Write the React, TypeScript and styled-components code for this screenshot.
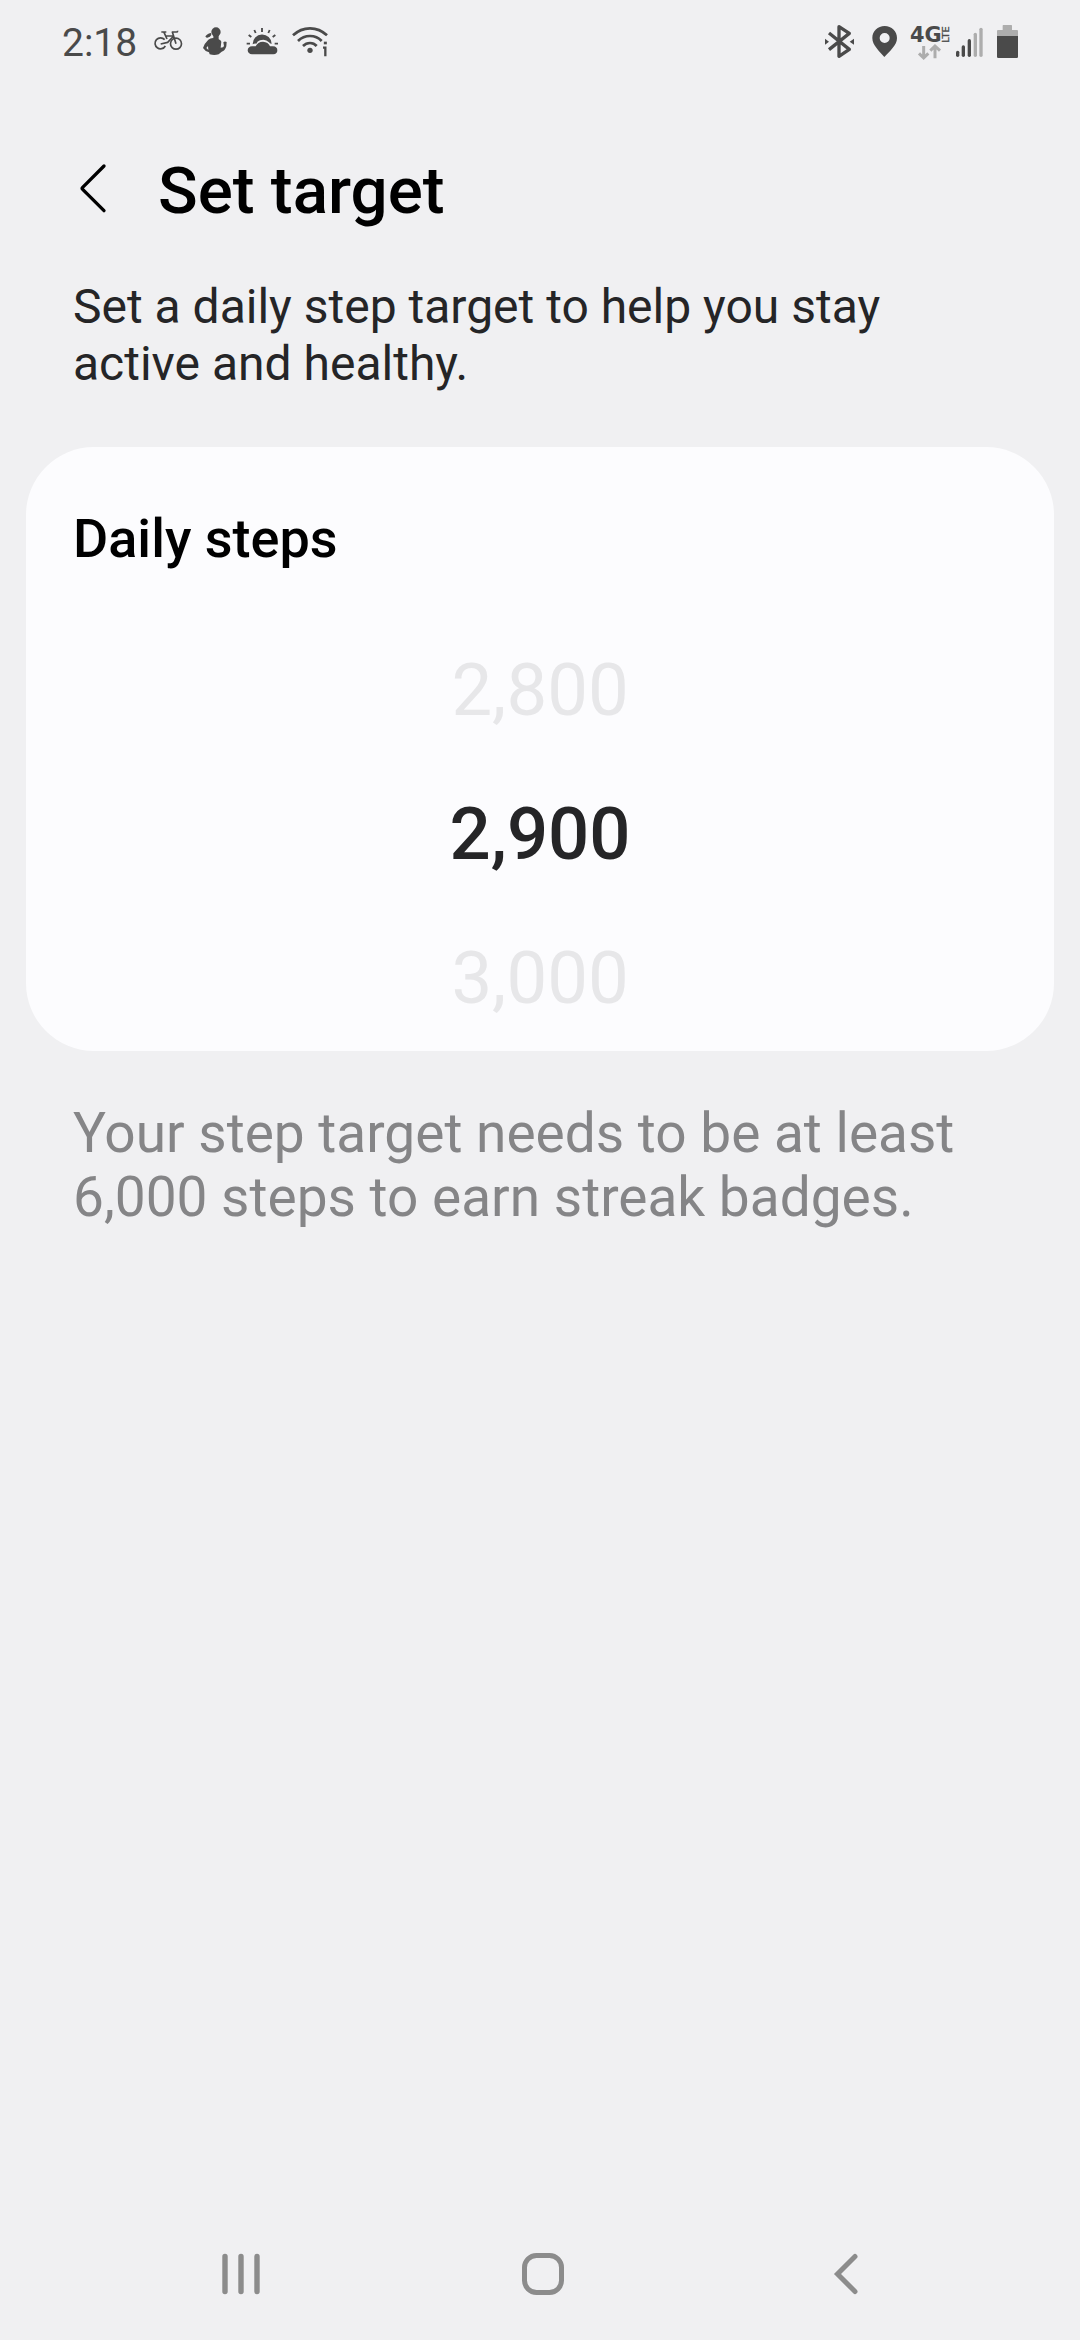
import React from 'react';
import styled, { createGlobalStyle } from 'styled-components';

const ink = '#4a4a4a';
const faint = '#adadad';

const GlobalStyle = createGlobalStyle`
  html, body { margin: 0; padding: 0; background: #f0f0f2; }
  * { box-sizing: border-box; }
  svg { display: block; flex: none; }
`;

const Screen = styled.div`
  width: 1080px;
  height: 2340px;
  display: flex;
  flex-direction: column;
  background: #f0f0f2;
  font-family: Roboto, 'Liberation Sans', sans-serif;
  overflow: hidden;
`;

const StatusBar = styled.header`
  height: 86px;
  padding: 20px 61px 0 62px;
  display: flex;
  justify-content: space-between;
  align-items: flex-start;
`;

const StatusGroup = styled.div`
  display: flex;
  align-items: flex-start;
`;

const Clock = styled.span`
  width: 92px;
  font-size: 39px;
  line-height: 46px;
  color: ${ink};
  white-space: nowrap;
`;

const StatusIcon = styled.svg<{ $gap?: number; $drop: number }>`
  margin-left: ${(p) => p.$gap ?? 0}px;
  margin-top: ${(p) => p.$drop}px;
  overflow: visible;
`;

const TitleBar = styled.div`
  height: 186px;
  padding: 66px 0 0 78px;
  display: flex;
  align-items: flex-start;
`;

const BackButton = styled.button`
  border: 0;
  padding: 10px 0 0;
  width: 80px;
  background: none;
`;

const Title = styled.h1`
  margin: 0;
  font-size: 65.5px;
  line-height: 78px;
  font-weight: 500;
  color: #000;
  white-space: nowrap;
`;

const Description = styled.p`
  margin: 0;
  padding: 6px 73px 0;
  height: 175px;
  font-size: 48px;
  line-height: 57px;
  color: #252527;
`;

const Card = styled.section`
  margin: 0 26px;
  height: 604px;
  padding-top: 60px;
  border-radius: 68px;
  background: #fcfcfe;
  overflow: hidden;
`;

const CardTitle = styled.h2`
  margin: 0 47px;
  height: 112px;
  font-size: 54px;
  line-height: 64px;
  font-weight: 500;
  color: #000;
`;

const Picker = styled.div`
  display: flex;
  flex-direction: column;
  align-items: center;
`;

const PickerValue = styled.div<{ $selected?: boolean }>`
  height: 144px;
  line-height: 144px;
  font-size: 72.5px;
  font-weight: ${(p) => (p.$selected ? 500 : 400)};
  color: ${(p) => (p.$selected ? '#252527' : '#e7e7e9')};
`;

const Hint = styled.p`
  margin: 0;
  padding: 50px 73px 0;
  flex: 1;
  font-size: 55px;
  line-height: 64px;
  color: #858587;
`;

const NavBar = styled.nav`
  height: 132px;
  padding: 44px 221px 0 221px;
  display: flex;
  justify-content: space-between;
  align-items: flex-start;
`;

const HomeIcon = styled.svg`
  margin-right: 8px;
`;

const Bike = () => (
  <StatusIcon $drop={10} width="29" height="21" viewBox="27 45 87 63" fill="none" stroke={ink} strokeWidth="5">
    <path d="M59 74A16.5 16.5 0 1 0 61 93" />
    <circle cx="93" cy="86" r="16.5" />
    <path d="M61 63H86L68 82 47 87M57 52 66 72M49 51H64M93 86 82 51H94Q98 51 98 47" strokeLinejoin="round" />
  </StatusIcon>
);

const Runner = () => (
  <StatusIcon $gap={20} $drop={7} width="24" height="28" viewBox="174 36 72 84" fill={ink}>
    <circle cx="213" cy="51" r="14" />
    <path d="M198 54Q191 54 181 64 183 69 187 68 196 67 199 60ZM205 60H221V74H205Z" />
    <path fillRule="evenodd" d="M204 69Q226 71 229 80L227 98 234 97 237 93 235 82Q239 77 245 81L244 94Q240 108 230 110L221 118Q208 122 194 118L192 112Q180 109 174 99 179 84 190 74 196 70 204 69ZM189 93 184 99 190 105Z" />
  </StatusIcon>
);

const Weather = () => (
  <StatusIcon $gap={20} $drop={7} width="32" height="28" viewBox="36 36 96 84">
    <path d="M81 39V51M58 45 62 54M104 45 100 54M41 60 49 66M121 60 113 66M35 86H45M119 86H129" stroke={ink} strokeWidth="5.5" fill="none" />
    <path d="M53 88A28 28 0 0 1 110 86Q105 87 102 82 91 70 75 76 67 79 64 86 58 85 53 88Z" fill={ink} />
    <path d="M51 118Q39 117 38 106 39 95 51 94L62 94Q68 80 84 80 100 81 105 94L114 94Q127 95 127 106 127 117 115 118Z" fill={ink} />
  </StatusIcon>
);

const Wifi = () => (
  <StatusIcon $gap={13} $drop={7} width="36" height="30" viewBox="169 36 108 90" fill="none" stroke={ink} strokeWidth="8">
    <path d="M172 61Q194 40 223 40T274 61M187 78Q202 63 223 63T258 78M202 93Q211 84 223 84T243 93" />
    <circle cx="223" cy="106" r="8" fill={ink} stroke="none" />
    <path d="M262 98H269V124" strokeWidth="7" />
    <path d="M269 80V88" strokeWidth="9" />
  </StatusIcon>
);

const Bluetooth = () => (
  <StatusIcon $drop={5} width="29" height="33" viewBox="45 30 87 99" fill="none" stroke={ink} strokeWidth="10">
    <path d="M57 54 118 103 87 124V35L118 55 57 104" strokeLinejoin="round" />
    <path d="M45 71 57 80 45 89ZM132 71 119 80 132 89Z" fill={ink} stroke="none" />
  </StatusIcon>
);

const Pin = () => (
  <StatusIcon $gap={18} $drop={6} width="25" height="32" viewBox="186 33 75 96">
    <path fillRule="evenodd" d="M224 33C203 33 187 49 187 69 187 91 207 107 223 126 240 107 261 91 261 69 261 49 245 33 224 33ZM224 54A15 15 0 1 1 224 84 15 15 0 0 1 224 54Z" fill={ink} />
  </StatusIcon>
);

const Network = () => (
  <StatusIcon $gap={13} $drop={7} width="39" height="33" viewBox="30 36 117 99">
    <text x="30" y="80" fontFamily="DejaVu Sans" fontWeight="700" fontSize="61" textLength="95" lengthAdjust="spacingAndGlyphs" fill={ink}>4G</text>
    <text transform="translate(147 83) rotate(-90)" fontFamily="DejaVu Sans" fontSize="28" textLength="49" lengthAdjust="spacingAndGlyphs" fill={ink} stroke={ink} strokeWidth="1">LTE</text>
    <path d="M71 93V128M57 115 71 129 85 115M105 130V94M91 107 105 93 120 107" fill="none" stroke={faint} strokeWidth="9" />
  </StatusIcon>
);

const signalBars = [
  { x: 173, top: 112, color: ink },
  { x: 190, top: 96, color: ink },
  { x: 208, top: 77, color: ink },
  { x: 226, top: 58, color: faint },
  { x: 243, top: 43, color: faint },
];

const Signal = () => (
  <StatusIcon $gap={7} $drop={7} width="27" height="30" viewBox="168 36 81 90">
    {signalBars.map((b) => (
      <path key={b.x} d={`M${b.x} ${b.top}V121`} stroke={b.color} strokeWidth="10" strokeLinecap="round" />
    ))}
  </StatusIcon>
);

const Battery = () => (
  <StatusIcon $gap={14} $drop={5} width="22" height="33" viewBox="291 30 66 99">
    <path d="M308 32Q308 30 310 30H334Q336 30 336 32V45H351Q354 45 354 48V63H291V48Q291 45 294 45H308Z" fill={faint} />
    <path d="M291 63H354V125Q354 129 350 129H295Q291 129 291 125Z" fill={ink} />
  </StatusIcon>
);

export default function App() {
  return (
    <Screen>
      <GlobalStyle />
      <StatusBar>
        <StatusGroup>
          <Clock>2:18</Clock>
          <Bike />
          <Runner />
          <Weather />
          <Wifi />
        </StatusGroup>
        <StatusGroup>
          <Bluetooth />
          <Pin />
          <Network />
          <Signal />
          <Battery />
        </StatusGroup>
      </StatusBar>
      <TitleBar>
        <BackButton aria-label="Back">
          <svg width="30" height="52" viewBox="84 66 90 156" fill="none" stroke="#000" strokeWidth="10" strokeLinecap="round" strokeLinejoin="round">
            <path d="M162 78 98 142Q95 145 98 148L162 212" />
          </svg>
        </BackButton>
        <Title>Set target</Title>
      </TitleBar>
      <Description>
        Set a daily step target to help you stay
        <br />
        active and healthy.
      </Description>
      <Card>
        <CardTitle>Daily steps</CardTitle>
        <Picker>
          <PickerValue>2,800</PickerValue>
          <PickerValue $selected>2,900</PickerValue>
          <PickerValue>3,000</PickerValue>
        </Picker>
      </Card>
      <Hint>
        Your step target needs to be at least
        <br />
        6,000 steps to earn streak badges.
      </Hint>
      <NavBar>
        <svg width="40" height="44" viewBox="0 0 40 44" stroke="#8c8c8c" strokeWidth="5.4" strokeLinecap="round">
          <path d="M4 4.5V39.5M20 4.5V39.5M36 4.5V39.5" />
        </svg>
        <HomeIcon width="44" height="44" viewBox="0 0 44 44" fill="none" stroke="#8c8c8c" strokeWidth="5">
          <rect x="3.5" y="3.5" width="37" height="37" rx="12" />
        </HomeIcon>
        <svg width="26" height="44" viewBox="0 0 26 44" fill="none" stroke="#8c8c8c" strokeWidth="5" strokeLinecap="round">
          <path d="M22 4.5 4.5 22 22 39.5" />
        </svg>
      </NavBar>
    </Screen>
  );
}
